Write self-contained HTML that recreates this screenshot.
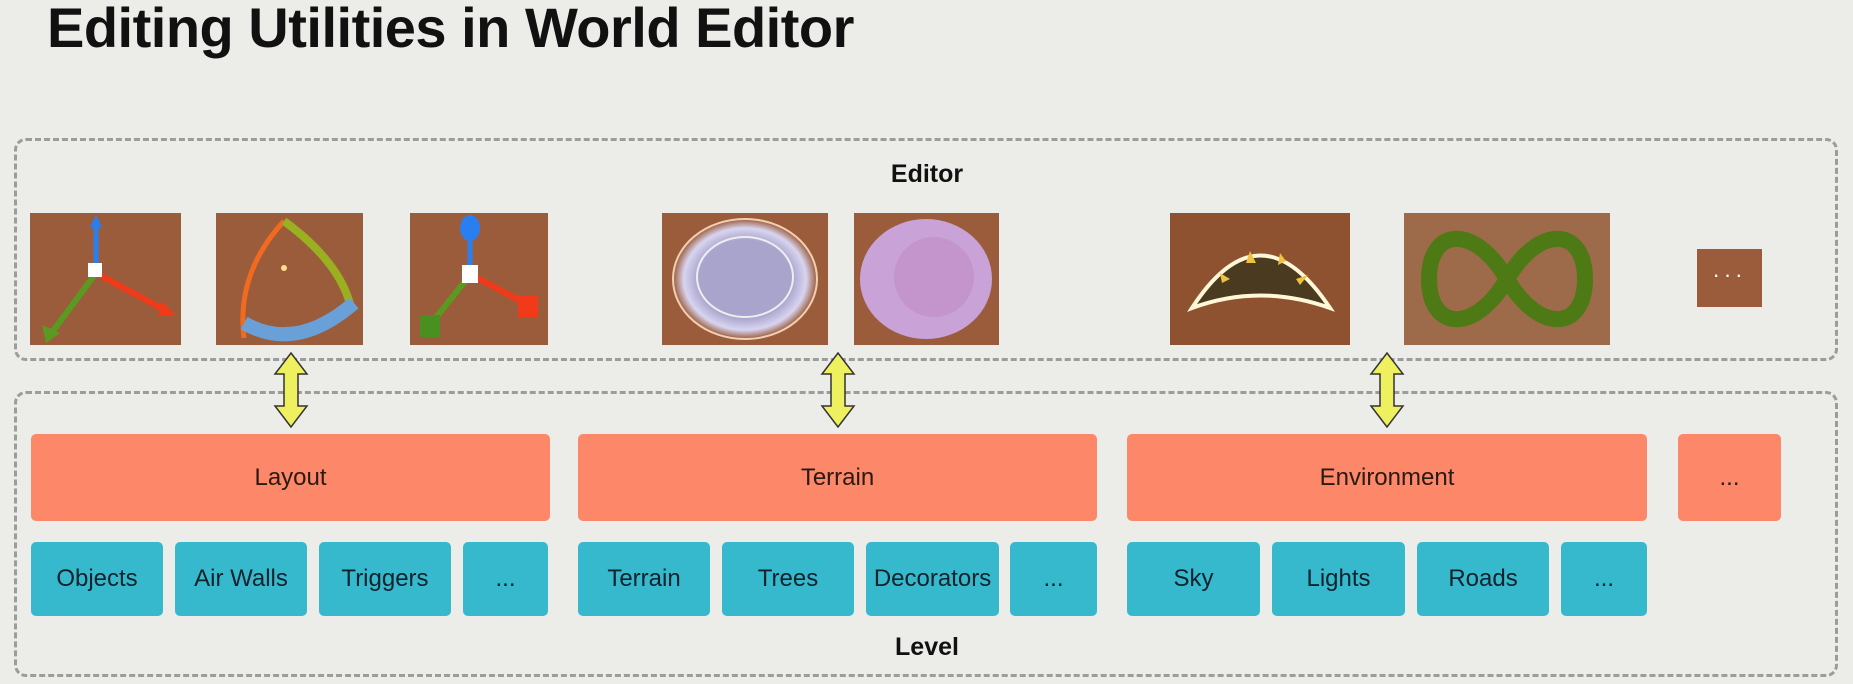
<!DOCTYPE html>
<html><head><meta charset="utf-8"><style>
body{margin:0;width:1853px;height:684px;background:#ececE8;position:relative;overflow:hidden;font-family:"Liberation Sans",Arial,sans-serif}
.a{position:absolute}
h1{position:absolute;left:47px;top:-5px;margin:0;font-size:56px;font-weight:bold;color:#111;letter-spacing:-0.5px}
.dash{position:absolute;border:3px dashed #9c9c9c;border-radius:12px;box-sizing:border-box}
.o{position:absolute;top:434px;height:87px;background:#fc8769;border-radius:5px;display:flex;align-items:center;justify-content:center;font-size:24px;color:#2a1a14}
.c{position:absolute;top:542px;height:74px;background:#37b9cd;border-radius:5px;display:flex;align-items:center;justify-content:center;font-size:24px;color:#10222c}
.t{position:absolute;top:213px;height:132px;background:#9b5c3c}
.lbl{position:absolute;font-weight:bold;font-size:25px;color:#111;transform:translateX(-50%)}
</style></head><body>
<h1>Editing Utilities in World Editor</h1>
<div class="dash" style="left:14px;top:138px;width:1824px;height:223px"></div>
<div class="dash" style="left:14px;top:391px;width:1824px;height:286px"></div>
<div class="lbl" style="left:927px;top:160px">Editor</div>
<div class="lbl" style="left:927px;top:633px">Level</div>

<svg class="t" style="left:30px;width:151px" viewBox="0 0 151 132"><line x1="66" y1="55" x2="66" y2="8" stroke="#2a7ff0" stroke-width="5"/><path d="M60 14 L66 2 L72 14Z" fill="#2a7ff0"/><line x1="66" y1="60" x2="140" y2="100" stroke="#f03a1a" stroke-width="6"/><path d="M132 88 L145 102 L128 102Z" fill="#f03a1a"/><line x1="66" y1="60" x2="20" y2="122" stroke="#5a9a20" stroke-width="6"/><path d="M12 112 L16 130 L30 120Z" fill="#5a9a20"/><rect x="58" y="50" width="14" height="14" fill="#fff"/></svg>
<svg class="t" style="left:216px;width:147px" viewBox="0 0 147 132"><path d="M68 8 Q20 60 28 125" stroke="#f06a20" stroke-width="5" fill="none"/><path d="M68 8 Q125 50 135 95" stroke="#9ab020" stroke-width="8" fill="none"/><path d="M28 110 Q80 140 138 90" stroke="#6aa0d8" stroke-width="14" fill="none"/><circle cx="68" cy="55" r="3" fill="#ffe08a"/></svg>
<svg class="t" style="left:410px;width:138px" viewBox="0 0 138 132"><line x1="60" y1="60" x2="60" y2="15" stroke="#2a7ff0" stroke-width="5"/><ellipse cx="60" cy="15" rx="10" ry="13" fill="#2a7ff0"/><line x1="62" y1="62" x2="118" y2="92" stroke="#f03a1a" stroke-width="6"/><rect x="108" y="82" width="20" height="22" fill="#f03a1a"/><line x1="60" y1="62" x2="20" y2="112" stroke="#5a9a20" stroke-width="6"/><rect x="10" y="102" width="20" height="22" fill="#4a9020"/><rect x="52" y="52" width="16" height="18" fill="#fff"/></svg>
<svg class="t" style="left:662px;width:166px" viewBox="0 0 166 132"><defs><radialGradient id="g1"><stop offset="0.65" stop-color="#a9a4cc"/><stop offset="0.85" stop-color="#d8d4f0"/><stop offset="1" stop-color="#9b5c3c"/></radialGradient></defs><ellipse cx="83" cy="66" rx="72" ry="60" fill="url(#g1)"/><ellipse cx="83" cy="66" rx="72" ry="60" fill="none" stroke="#f0d0b0" stroke-width="2"/><ellipse cx="83" cy="64" rx="48" ry="40" fill="none" stroke="#eee" stroke-width="2"/></svg>
<svg class="t" style="left:854px;width:145px" viewBox="0 0 145 132"><ellipse cx="72" cy="66" rx="66" ry="60" fill="#c9a2d8"/><ellipse cx="80" cy="64" rx="40" ry="40" fill="#c290c8" opacity=".7"/></svg>
<svg class="t" style="left:1170px;width:180px;background:#8e5230" viewBox="0 0 180 132"><path d="M22 95 Q90 -10 160 95 Q90 70 22 95Z" fill="#4a3a20" stroke="#fff8d8" stroke-width="4"/><g fill="#f0c040"><path d="M50 60 l10 6 -8 4z"/><path d="M80 38 l6 12 -10 0z"/><path d="M110 40 l-2 12 8 -4z"/><path d="M138 62 l-12 4 4 6z"/></g></svg>
<svg class="t" style="left:1404px;width:206px;background:#9d6a4a" viewBox="0 0 206 132"><path d="M103 66 C70 10 25 15 25 66 C25 117 70 122 103 66 C136 10 181 15 181 66 C181 117 136 122 103 66Z" fill="none" stroke="#4d7a14" stroke-width="16"/></svg>
<div class="a" style="left:1697px;top:249px;width:65px;height:58px;background:#9b5c3c;color:#fff;font-size:22px;text-align:center;line-height:52px;letter-spacing:4px">···</div>

<svg class="a" style="left:273px;top:352px" width="36" height="76" viewBox="0 0 36 76"><path d="M18 1 L34 22 L25 22 L25 54 L34 54 L18 75 L2 54 L11 54 L11 22 L2 22Z" fill="#eef060" stroke="#333" stroke-width="1.5"/></svg>
<svg class="a" style="left:820px;top:352px" width="36" height="76" viewBox="0 0 36 76"><path d="M18 1 L34 22 L25 22 L25 54 L34 54 L18 75 L2 54 L11 54 L11 22 L2 22Z" fill="#eef060" stroke="#333" stroke-width="1.5"/></svg>
<svg class="a" style="left:1369px;top:352px" width="36" height="76" viewBox="0 0 36 76"><path d="M18 1 L34 22 L25 22 L25 54 L34 54 L18 75 L2 54 L11 54 L11 22 L2 22Z" fill="#eef060" stroke="#333" stroke-width="1.5"/></svg>

<div class="o" style="left:31px;width:519px">Layout</div>
<div class="o" style="left:578px;width:519px">Terrain</div>
<div class="o" style="left:1127px;width:520px">Environment</div>
<div class="o" style="left:1678px;width:103px">...</div>

<div class="c" style="left:31px;width:132px">Objects</div>
<div class="c" style="left:175px;width:132px">Air Walls</div>
<div class="c" style="left:319px;width:132px">Triggers</div>
<div class="c" style="left:463px;width:85px">...</div>
<div class="c" style="left:578px;width:132px">Terrain</div>
<div class="c" style="left:722px;width:132px">Trees</div>
<div class="c" style="left:866px;width:133px">Decorators</div>
<div class="c" style="left:1010px;width:87px">...</div>
<div class="c" style="left:1127px;width:133px">Sky</div>
<div class="c" style="left:1272px;width:133px">Lights</div>
<div class="c" style="left:1417px;width:132px">Roads</div>
<div class="c" style="left:1561px;width:86px">...</div>
</body></html>
